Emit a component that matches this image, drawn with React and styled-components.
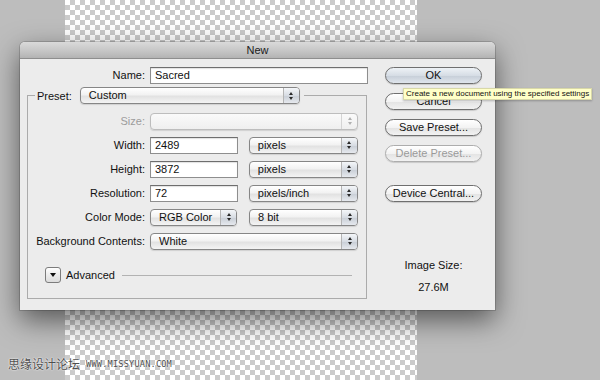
import React from 'react';
import styled, { createGlobalStyle } from 'styled-components';

const Global = createGlobalStyle`
  html, body {
    margin: 0;
    padding: 0;
    background: #bdbdbd;
  }
  body {
    font-family: "Liberation Sans", Arial, sans-serif;
  }
`;

const Stage = styled.div`
  position: relative;
  width: 600px;
  height: 380px;
  overflow: hidden;
  background: #bdbdbd;
  display: flex;
`;

// photoshop transparent canvas behind the dialog
const Canvas = styled.div`
  margin-left: 65px;
  width: 352px;
  height: 100%;
  background-color: #fff;
  background-image:
    linear-gradient(45deg, #cbcbcb 25%, transparent 25%, transparent 75%, #cbcbcb 75%),
    linear-gradient(45deg, #cbcbcb 25%, transparent 25%, transparent 75%, #cbcbcb 75%);
  background-size: 10px 10px;
  background-position: 0 0, 5px 5px;
`;

const Dialog = styled.div`
  position: absolute;
  left: 20px;
  top: 42px;
  width: 475px;
  height: 268px;
  background: #ececec;
  border-radius: 5px 5px 0 0;
  box-shadow: 0 10px 28px rgba(0, 0, 0, 0.55), 0 0 0 1px rgba(0, 0, 0, 0.15);
  display: flex;
  flex-direction: column;
  font-size: 11px;
  color: #111;
`;

const TitleBar = styled.div`
  height: 16px;
  line-height: 16px;
  text-align: center;
  font-size: 11px;
  color: #1a1a1a;
  border-radius: 5px 5px 0 0;
  background: linear-gradient(#dadada, #c4c4c4 60%, #b3b3b3);
  border-bottom: 1px solid #8e8e8e;
`;

const Body = styled.div`
  display: flex;
  padding-top: 8px;
`;

const LeftCol = styled.div`
  width: 355px;
  display: flex;
  flex-direction: column;
`;

const RightCol = styled.div`
  width: 97px;
  margin-left: 10px;
  display: flex;
  flex-direction: column;
`;

const Row = styled.div`
  display: flex;
  align-items: center;
  height: 16px;
  gap: ${(p) => p.$gap || 5}px;
`;

const Label = styled.span`
  width: ${(p) => p.$w || 117}px;
  flex-shrink: 0;
  text-align: right;
  white-space: nowrap;
  color: ${(p) => (p.$disabled ? '#9c9c9c' : '#111')};
`;

const TextInput = styled.div`
  box-sizing: border-box;
  width: ${(p) => p.$w}px;
  height: 17px;
  line-height: 15px;
  padding-left: 4px;
  background: #fff;
  border: 1px solid #8e8e8e;
  border-top-color: #6e6e6e;
  box-shadow: inset 0 1px 1px rgba(0, 0, 0, 0.12);
`;

const Popup = styled.div`
  box-sizing: border-box;
  width: ${(p) => p.$w}px;
  height: 17px;
  display: flex;
  border: 1px solid ${(p) => (p.$disabled ? '#bdbdbd' : '#868686')};
  border-radius: 4px;
  background: ${(p) =>
    p.$disabled
      ? 'linear-gradient(#fafafa, #efefef)'
      : 'linear-gradient(#ffffff, #f2f2f2 45%, #e2e2e2 55%, #f4f4f4)'};
  box-shadow: 0 1px 1px rgba(0, 0, 0, 0.12);
  overflow: hidden;
`;

const PopupText = styled.span`
  flex: 1;
  padding-left: 8px;
  line-height: 15px;
  white-space: nowrap;
`;

const PopupCap = styled.span`
  width: 15px;
  border-left: 1px solid ${(p) => (p.$disabled ? '#d4d4d4' : '#b4b4b4')};
  background: ${(p) =>
    p.$disabled ? 'transparent' : 'linear-gradient(#f4f6f9, #d7dce3 50%, #c8ced6 52%, #e6e9ee)'};
  display: flex;
  flex-direction: column;
  align-items: center;
  justify-content: center;
  gap: 2px;
`;

const Tri = styled.span`
  width: 0;
  height: 0;
  border-left: 2.5px solid transparent;
  border-right: 2.5px solid transparent;
  ${(p) => (p.$up ? 'border-bottom' : 'border-top')}: 3px solid ${(p) => (p.$disabled ? '#b0b0b0' : '#2a2a2a')};
`;

const Fieldset = styled.fieldset`
  box-sizing: border-box;
  width: 340px;
  margin: 4px 0 0 7px;
  padding: 9px 8px 15px 0;
  border: 1px solid #ababab;
  display: flex;
  flex-direction: column;
  gap: 8px;
  min-inline-size: 0;
`;

const Legend = styled.legend`
  display: flex;
  align-items: center;
  gap: 8px;
  margin-left: 7px;
  padding: 0 4px 0 2px;
`;

const AdvancedRow = styled.div`
  display: flex;
  align-items: center;
  height: 16px;
  margin-top: 10px;
  padding-left: 17px;
`;

const Disclosure = styled.span`
  box-sizing: border-box;
  width: 16px;
  height: 16px;
  border: 1px solid #7c7c7c;
  border-radius: 3px;
  background: linear-gradient(#ffffff, #ececec 50%, #dcdcdc);
  display: flex;
  align-items: center;
  justify-content: center;
`;

const DownTri = styled.span`
  width: 0;
  height: 0;
  border-left: 3.5px solid transparent;
  border-right: 3.5px solid transparent;
  border-top: 4px solid #111;
`;

const AdvText = styled.span`
  margin-left: 5px;
`;

const Rule = styled.span`
  flex: 1;
  height: 1px;
  margin: 0 6px 0 7px;
  background: #b2b2b2;
`;

const Button = styled.div`
  box-sizing: border-box;
  height: 17px;
  line-height: 15px;
  text-align: center;
  border-radius: 9px;
  margin-top: ${(p) => p.$mt || 0}px;
  border: 1px solid ${(p) => (p.$disabled ? '#adadad' : '#6f6f6f')};
  color: ${(p) => (p.$disabled ? '#9a9a9a' : '#111')};
  background: ${(p) =>
    p.$default
      ? 'linear-gradient(#eef2f6, #d6dde5 50%, #c6ced8 52%, #dfe5ec)'
      : 'linear-gradient(#ffffff, #f3f3f3 50%, #e3e3e3 52%, #f2f2f2)'};
  box-shadow: 0 1px 1px rgba(0, 0, 0, 0.15);
`;

const SizeInfo = styled.div`
  margin-top: 57px;
  display: flex;
  flex-direction: column;
  align-items: center;
  gap: 9px;
  line-height: 13px;
`;

const Tooltip = styled.div`
  position: absolute;
  left: 403px;
  top: 88px;
  width: 189px;
  height: 12px;
  box-sizing: border-box;
  padding-left: 2px;
  background: #ffffc8;
  border: 1px solid #d8d8a8;
  font-size: 8px;
  line-height: 10px;
  color: #111;
  white-space: nowrap;
  box-shadow: 0 1px 2px rgba(0, 0, 0, 0.25);
`;

const Watermark = styled.div`
  position: absolute;
  left: 8px;
  top: 355px;
  display: flex;
  align-items: center;
  gap: 6px;
  color: #4e4e4e;
  text-shadow: 0 0 2px #fff, 0 0 1px #fff;
`;

const WmCn = styled.span`
  font-family: "Noto Sans CJK SC", sans-serif;
  font-size: 12px;
`;

const WmUrl = styled.span`
  font-family: "DejaVu Sans Mono", monospace;
  font-size: 8.6px;
  letter-spacing: 0.2px;
`;

const Select = ({ w, children, disabled }) => (
  <Popup $w={w} $disabled={disabled}>
    <PopupText>{children}</PopupText>
    <PopupCap $disabled={disabled}>
      <Tri $up $disabled={disabled} />
      <Tri $disabled={disabled} />
    </PopupCap>
  </Popup>
);

const App = () => (
  <Stage>
    <Global />
    <Canvas />
    <Dialog>
      <TitleBar>New</TitleBar>
      <Body>
        <LeftCol>
          <Row>
            <Label $w={125}>Name:</Label>
            <TextInput $w={218}>Sacred</TextInput>
          </Row>
          <Fieldset>
            <Legend>
              <span>Preset:</span>
              <Select w={220}>Custom</Select>
            </Legend>
            <Row>
              <Label $disabled>Size:</Label>
              <Select w={208} disabled />
            </Row>
            <Row $gap={5}>
              <Label>Width:</Label>
              <TextInput $w={90}>2489</TextInput>
              <span style={{ width: 1 }} />
              <Select w={112}>pixels</Select>
            </Row>
            <Row $gap={5}>
              <Label>Height:</Label>
              <TextInput $w={90}>3872</TextInput>
              <span style={{ width: 1 }} />
              <Select w={112}>pixels</Select>
            </Row>
            <Row $gap={5}>
              <Label>Resolution:</Label>
              <TextInput $w={90}>72</TextInput>
              <span style={{ width: 1 }} />
              <Select w={112}>pixels/inch</Select>
            </Row>
            <Row $gap={5}>
              <Label>Color Mode:</Label>
              <Select w={87}>RGB Color</Select>
              <span style={{ width: 2 }} />
              <Select w={109}>8 bit</Select>
            </Row>
            <Row>
              <Label>Background Contents:</Label>
              <Select w={208}>White</Select>
            </Row>
            <AdvancedRow>
              <Disclosure>
                <DownTri />
              </Disclosure>
              <AdvText>Advanced</AdvText>
              <Rule />
            </AdvancedRow>
          </Fieldset>
        </LeftCol>
        <RightCol>
          <Button $default>OK</Button>
          <Button $mt={9}>Cancel</Button>
          <Button $mt={9}>Save Preset...</Button>
          <Button $mt={9} $disabled>Delete Preset...</Button>
          <Button $mt={23}>Device Central...</Button>
          <SizeInfo>
            <span>Image Size:</span>
            <span>27.6M</span>
          </SizeInfo>
        </RightCol>
      </Body>
    </Dialog>
    <Tooltip>Create a new document using the specified settings</Tooltip>
    <Watermark>
      <WmCn>思缘设计论坛</WmCn>
      <WmUrl>WWW.MISSYUAN.COM</WmUrl>
    </Watermark>
  </Stage>
);

export default App;
